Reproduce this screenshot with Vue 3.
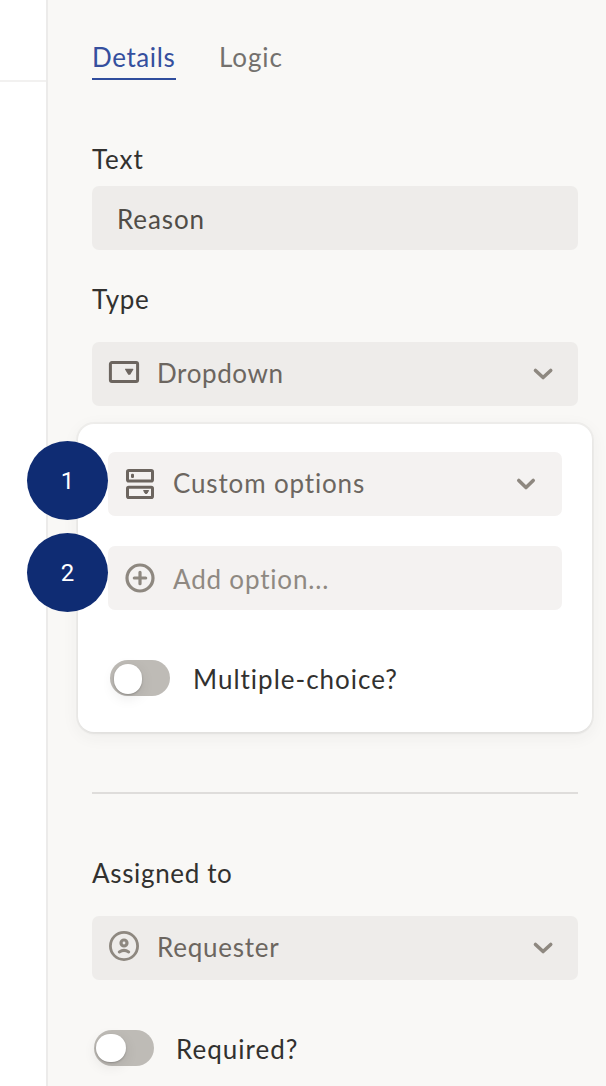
<script setup>
const badges = [1, 2]
</script>

<template>
  <div class="page">
    <div class="canvas"><div class="canvas-header"></div></div>
    <aside class="panel">
      <nav class="tabs">
        <a class="tab active"><span class="t-details">Details</span></a>
        <a class="tab"><span class="t-logic">Logic</span></a>
      </nav>

      <label class="label l-text"><span class="t-text">Text</span></label>
      <div class="field input"><span class="t-reason">Reason</span></div>

      <label class="label l-type"><span class="t-type">Type</span></label>
      <div class="field">
        <svg class="icon" width="32" height="32" viewBox="0 0 32 32">
          <rect x="2.4" y="6.6" width="27.2" height="19" rx="1.5" fill="none" stroke="#6c655f" stroke-width="3" />
          <path d="M17.6 13.3h7.2l-3 4.8h-1.2z" fill="#6c655f" stroke="#6c655f" stroke-width="1.2" stroke-linejoin="round" />
        </svg>
        <span class="t-dropdown">Dropdown</span>
        <svg class="chevron" width="24" height="24" viewBox="0 0 24 24"><path d="M4.5 8.5l7.6 7 7.6-7" /></svg>
      </div>

      <section class="card">
        <div class="field light">
          <svg class="icon" width="32" height="32" viewBox="0 0 32 32">
            <g fill="none" stroke="#6c655f" stroke-width="3">
              <rect x="3.5" y="2.5" width="25" height="10.6" rx="1.3" />
              <rect x="3.5" y="19.2" width="25" height="10.4" rx="1.3" />
            </g>
            <rect x="7" y="5.7" width="3" height="4.2" rx="1.2" fill="#6c655f" />
            <path d="M19.6 22.5h5l-1.7 3h-1.6z" fill="#6c655f" stroke="#6c655f" stroke-linejoin="round" />
          </svg>
          <span class="t-custom">Custom options</span>
          <svg class="chevron" width="24" height="24" viewBox="0 0 24 24"><path d="M4.8 8.5l7.2 7 7.2-7" /></svg>
        </div>
        <div class="field light add">
          <svg class="icon" width="32" height="32" viewBox="0 0 32 32" fill="none" stroke="#8e8880" stroke-linecap="round">
            <circle cx="16" cy="16" r="13" stroke-width="3.2" />
            <path d="M10.3 16h11.4M16 10.3v11.4" stroke-width="3.2" />
          </svg>
          <span class="t-add">Add option...</span>
        </div>
        <div class="switch-row">
          <span class="switch"><i></i></span>
          <span class="t-multi">Multiple-choice?</span>
        </div>
        <div class="badges">
          <b v-for="n in badges" :key="n">{{ n }}</b>
        </div>
      </section>

      <hr class="divider" />

      <label class="label l-assigned"><span class="t-assigned">Assigned to</span></label>
      <div class="field">
        <svg class="icon" width="32" height="32" viewBox="0 0 32 32" fill="none" stroke="#8e8880" stroke-linecap="round">
          <circle cx="16" cy="16" r="13.6" stroke-width="2.8" />
          <circle cx="16" cy="13" r="3" stroke-width="3.2" />
          <path d="M11.3 22q4.7-3.2 9.4 0" stroke-width="3" />
        </svg>
        <span class="t-requester">Requester</span>
        <svg class="chevron" width="24" height="24" viewBox="0 0 24 24"><path d="M4.5 8.5l7.6 7 7.6-7" /></svg>
      </div>

      <div class="switch-row required">
        <span class="switch wide"><i></i></span>
        <span class="t-required">Required?</span>
      </div>
    </aside>
  </div>
</template>

<style>
body { margin: 0; overflow: hidden; }
</style>

<style scoped>
.page {
  display: flex;
  width: 606px;
  height: 1086px;
  overflow: hidden;
  box-sizing: border-box;
  background: #fff;
  font: 26px/32px Lato, sans-serif;
  font-variant-ligatures: none;
  color: #32312f;
}
.canvas { width: 46px; flex: none; }
.canvas-header { height: 80px; border-bottom: 2px solid #f2f1f0; }
.panel {
  flex: none;
  width: 560px;
  box-sizing: border-box;
  border-left: 2px solid #ecebea;
  background: #f9f8f6;
  padding: 40px 28px 0 44px;
}
.tabs { display: flex; gap: 43px; height: 40px; }
.tab { box-sizing: border-box; height: 40px; padding-top: 1px; color: #74716e; white-space: nowrap; }
.tab.active { width: 84px; color: #354f9e; border-bottom: 2px solid #304d9d; }
.label { display: block; box-sizing: border-box; height: 32px; padding-top: 1px; }
.l-text { margin: 62px 0 12px; }
.l-type { margin: 32px 0 28px; }
.l-assigned { margin: 62px 0 28px; }
.t-details { letter-spacing: 0.6px; }
.t-logic { letter-spacing: 0.9px; }
.t-text { letter-spacing: 0.9px; }
.t-reason { letter-spacing: 0.9px; }
.t-type { letter-spacing: 0.6px; }
.t-dropdown { letter-spacing: 0.6px; }
.t-custom { letter-spacing: 0.85px; }
.t-add { letter-spacing: 0.82px; }
.t-multi { letter-spacing: 1px; }
.t-assigned { letter-spacing: 0.65px; }
.t-requester { letter-spacing: 0.75px; }
.t-required { letter-spacing: 1px; }
.field {
  display: flex;
  align-items: center;
  box-sizing: border-box;
  height: 64px;
  padding: 0 23px 0 16px;
  border-radius: 7px;
  background: #eeecea;
  color: #6c6660;
  white-space: nowrap;
}
.field > span { padding-bottom: 2px; }
.field.input { padding-left: 25px; color: #504d47; }
.field.input > span { padding: 2px 0 0; }
.icon { flex: none; margin-right: 17px; position: relative; top: -2px; }
.chevron { margin-left: auto; fill: none; stroke: #8e8880; stroke-width: 3.6; stroke-linecap: round; stroke-linejoin: round; }
.card {
  position: relative;
  box-sizing: border-box;
  width: 514px;
  height: 308px;
  margin: 18px 0 0 -14px;
  padding: 28px 30px;
  border-radius: 16px;
  background: #fff;
  box-shadow: 0 0 0 2px rgba(50, 50, 50, 0.04), 0 2px 3px rgba(50, 50, 50, 0.04), 0 4px 18px rgba(50, 50, 50, 0.06);
}
.field.light { background: #f4f2f1; }
.card .icon { top: 0; }
.card .chevron { margin-right: 1px; }
.field.add { margin-top: 30px; color: #8f8982; }
.field.add > span { padding: 2px 0 0; }
.switch-row { display: flex; align-items: center; height: 36px; margin: 50px 0 0 2px; white-space: nowrap; }
.switch-row > span:last-child { padding-top: 2px; }
.switch {
  flex: none;
  box-sizing: border-box;
  width: 60px;
  height: 36px;
  margin-right: 23px;
  padding: 4px;
  border-radius: 18px;
  background: #bebbb6;
}
.switch i {
  display: block;
  width: 28px;
  height: 30px;
  border-radius: 15px;
  background: #fff;
  box-shadow: 0 1px 2px rgba(0, 0, 0, 0.22), 0 4px 14px rgba(0, 0, 0, 0.09);
}
.switch.wide { padding-left: 2px; margin-right: 22px; }
.switch.wide i { width: 30px; height: 28px; }
.badges { position: absolute; left: -51px; top: 17px; display: grid; gap: 13px; }
.badges b {
  width: 81px;
  height: 79px;
  border-radius: 50%;
  background: #0f2c73;
  color: #fff;
  font: 24px/81px Roboto, Arial, sans-serif;
  text-align: center;
}
.divider { height: 2px; margin: 60px 0 0; border: 0; background: #dfdddb; }
</style>
